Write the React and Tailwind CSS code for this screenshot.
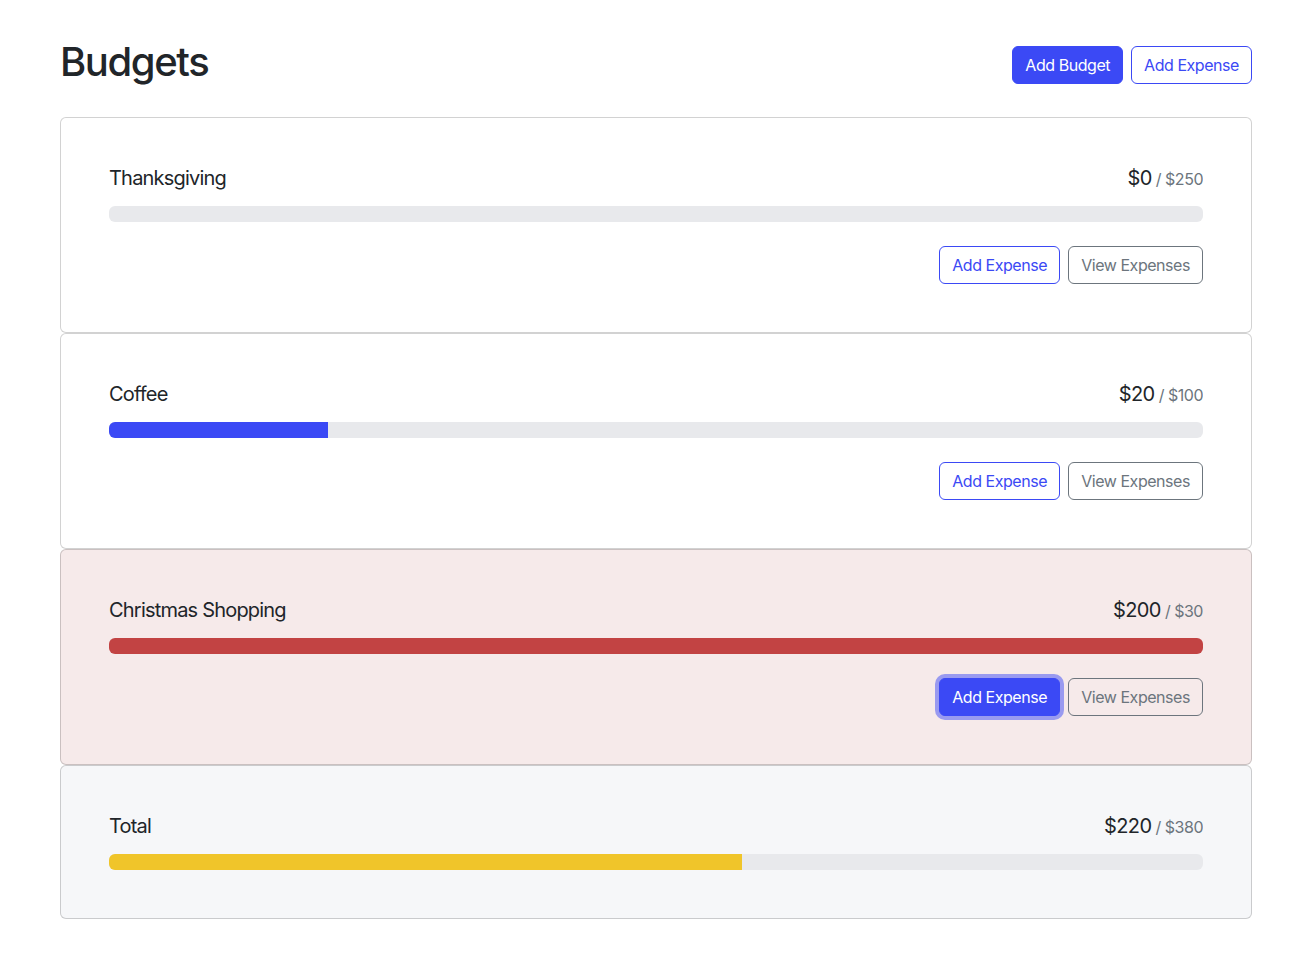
import React from "react";

const budgets = [
  { name: "Thanksgiving", amount: 0, max: 250, color: "bg-[#3b49f5]", variant: "white", focused: false },
  { name: "Coffee", amount: 20, max: 100, color: "bg-[#3b49f5]", variant: "white", focused: false },
  { name: "Christmas Shopping", amount: 200, max: 30, color: "bg-[#c24343]", variant: "danger", focused: true },
];

function Card({ name, amount, max, color, variant, focused, hideButtons }) {
  const pct = Math.min(100, (amount / max) * 100);
  const bg =
    variant === "danger" ? "bg-[#f6eaea]" : variant === "light" ? "bg-[#f6f7f9]" : "bg-white";
  return (
    <div className={`${bg} border border-black/[0.175] rounded-[6px] p-[48px]`}>
      <div className="flex items-baseline justify-between mb-[16px] h-[24px] leading-[24px] overflow-hidden">
        <div className="text-[20px] text-[#212529] tracking-[-0.04em]">{name}</div>
        <div className="flex items-baseline">
          <span className="text-[20px] text-[#212529] tracking-[-0.03em]">${amount}</span>
          <span className="text-[16px] text-[#6c757d] ml-[4px] tracking-[-0.03em]">/ ${max}</span>
        </div>
      </div>
      <div className="h-[16px] rounded-[6px] bg-[#e8e9ec] overflow-hidden flex">
        <div className={`${color} h-full`} style={{ width: `${pct}%` }} />
      </div>
      {!hideButtons && (
        <div className="flex justify-end gap-[8px] mt-[24px]">
          {focused ? (
            <button className="h-[38px] px-[12px] rounded-[6px] border border-[#3b49f5] bg-[#3b49f5] text-white text-[16px] tracking-[-0.028em] shadow-[0_0_0_4px_rgba(59,73,245,0.5)]">
              Add Expense
            </button>
          ) : (
            <button className="h-[38px] px-[12px] rounded-[6px] border border-[#3b49f5] text-[#3b49f5] text-[16px] tracking-[-0.028em]">
              Add Expense
            </button>
          )}
          <button className="h-[38px] px-[12px] rounded-[6px] border border-[#6c757d] text-[#6c757d] text-[16px] tracking-[-0.028em]">
            View Expenses
          </button>
        </div>
      )}
    </div>
  );
}

export default function App() {
  return (
    <div className="min-h-screen bg-white font-['Inter','Liberation_Sans',sans-serif] text-[#212529]">
      <div className="ml-[60px] w-[1192px] pt-[38px]">
        <div className="flex items-start justify-between mb-[31px]">
          <h1 className="text-[40px] font-medium leading-[48px] tracking-[-0.035em]">Budgets</h1>
          <div className="flex gap-[8px] mt-[8px]">
            <button className="h-[38px] px-[12px] rounded-[6px] border border-[#3b49f5] bg-[#3b49f5] text-white text-[16px] tracking-[-0.028em]">
              Add Budget
            </button>
            <button className="h-[38px] px-[12px] rounded-[6px] border border-[#3b49f5] text-[#3b49f5] text-[16px] tracking-[-0.028em]">
              Add Expense
            </button>
          </div>
        </div>
        <div className="flex flex-col">
          {budgets.map((b) => (
            <Card key={b.name} {...b} />
          ))}
          <Card name="Total" amount={220} max={380} color="bg-[#f0c52a]" variant="light" hideButtons />
        </div>
      </div>
    </div>
  );
}
